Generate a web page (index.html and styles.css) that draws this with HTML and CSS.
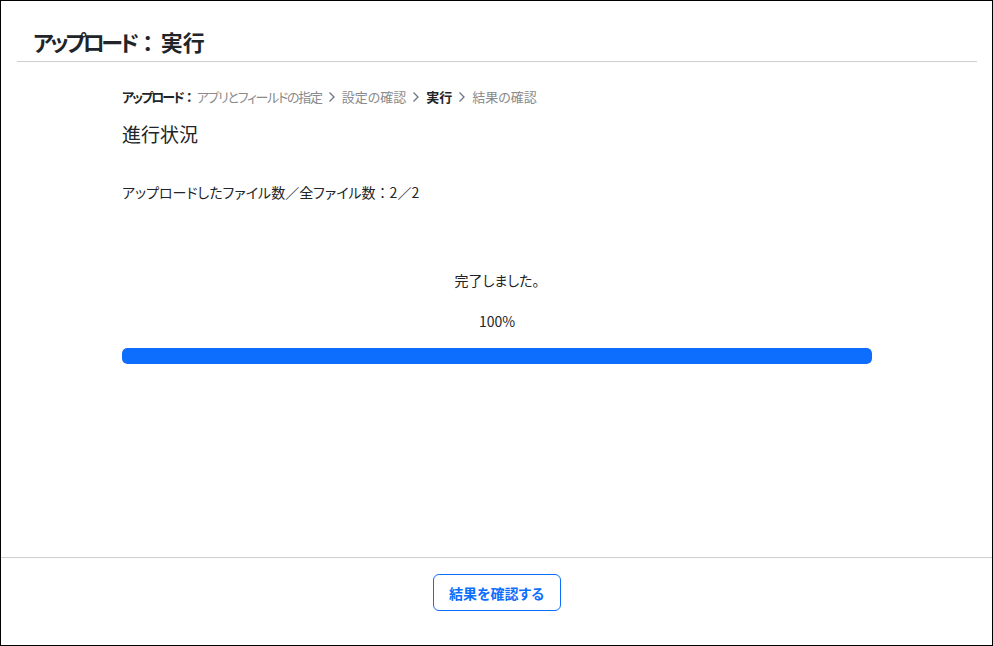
FILE: index.html
```html
<!DOCTYPE html>
<html lang="ja">
<head>
<meta charset="utf-8">
<title>アップロード：実行</title>
<link rel="stylesheet" href="styles.css">
</head>
<body>
<div class="frame">
  <header class="header">
    <h1 class="title"><span class="kana-tight">アップロード</span><span class="colon title-colon">：</span>実行</h1>
  </header>
  <main class="main">
    <div class="content">
      <nav class="crumbs">
        <span class="crumb-label"><span class="kana-tight">アップロード</span><span class="colon">：</span></span>
        <span class="crumb kana-narrow">アプリとフィールドの指定</span>
        <svg class="chev" viewBox="0 0 8 12" width="8" height="12"><path d="M1.5 1.5 L6 6 L1.5 10.5" fill="none" stroke="currentColor" stroke-width="1.3"/></svg>
        <span class="crumb">設定の確認</span>
        <svg class="chev" viewBox="0 0 8 12" width="8" height="12"><path d="M1.5 1.5 L6 6 L1.5 10.5" fill="none" stroke="currentColor" stroke-width="1.3"/></svg>
        <span class="crumb current">実行</span>
        <svg class="chev" viewBox="0 0 8 12" width="8" height="12"><path d="M1.5 1.5 L6 6 L1.5 10.5" fill="none" stroke="currentColor" stroke-width="1.3"/></svg>
        <span class="crumb">結果の確認</span>
      </nav>
      <h2 class="section-title">進行状況</h2>
      <p class="count">アップロードしたファイル数／全ファイル数<span class="colon">：</span>2／2</p>
      <p class="status">完了しました。</p>
      <p class="percent">100%</p>
      <div class="bar"><div class="bar-fill" style="width:100%"></div></div>
    </div>
  </main>
  <footer class="footer">
    <button class="btn" type="button">結果を確認する</button>
  </footer>
</div>
</body>
</html>
```

FILE: styles.css
```css
* { box-sizing: border-box; }
html, body { margin: 0; padding: 0; background: #fff; }
body {
  font-family: "Noto Sans CJK JP", "Noto Sans", sans-serif;
  font-feature-settings: "palt";
  color: #212529;
}
.frame {
  width: 993px;
  height: 646px;
  border: 1px solid #000;
  display: flex;
  flex-direction: column;
}
.header {
  padding: 0 15px 0 16px;
}
.title {
  margin: 0;
  padding: 25px 0 5px 16px;
  font-size: 22px;
  line-height: 30px;
  font-weight: 700;
  border-bottom: 1px solid #cfcfcf;
}
.kana-tight { letter-spacing: -0.15em; }
.kana-narrow { letter-spacing: -0.1em; }
.colon { font-feature-settings: normal; }
.title-colon { margin-left: 1px; margin-right: 2px; }
.main {
  flex: 1;
}
.content {
  width: 750px;
  margin: 0 0 0 121px;
  padding-top: 25px;
}
.crumbs {
  display: flex;
  align-items: center;
  gap: 6px;
  font-size: 13px;
  line-height: 20px;
  color: #8a8a8a;
}
.crumb-label {
  font-weight: 700;
  color: #212529;
  margin-right: -5px;
}
.crumb.current {
  font-weight: 700;
  color: #212529;
}
.chev { color: #6c7683; flex: none; }
.section-title {
  margin: 14px 0 0;
  font-size: 19px;
  line-height: 26px;
  font-weight: 400;
}
.count {
  margin: 35px 0 0;
  font-size: 14px;
  line-height: 20px;
}
.status {
  margin: 68px 0 0;
  text-align: center;
  font-size: 14px;
  line-height: 20px;
}
.percent {
  margin: 21px 0 0;
  text-align: center;
  font-size: 14px;
  line-height: 20px;
}
.bar {
  margin-top: 17px;
  height: 16px;
  border-radius: 5px;
  background: #e9ecef;
  overflow: hidden;
}
.bar-fill {
  height: 100%;
  background: #0d6efd;
  border-radius: 5px;
}
.footer {
  height: 88px;
  border-top: 1px solid #cfcfcf;
  display: flex;
  justify-content: center;
  align-items: flex-start;
  padding-top: 16px;
}
.btn {
  font-family: inherit;
  font-feature-settings: "palt";
  font-size: 14px;
  font-weight: 700;
  line-height: 20px;
  color: #0d6efd;
  background: #fff;
  border: 1px solid #0d6efd;
  border-radius: 6px;
  height: 37px;
  width: 128px;
  padding: 0;
  cursor: pointer;
}
```
